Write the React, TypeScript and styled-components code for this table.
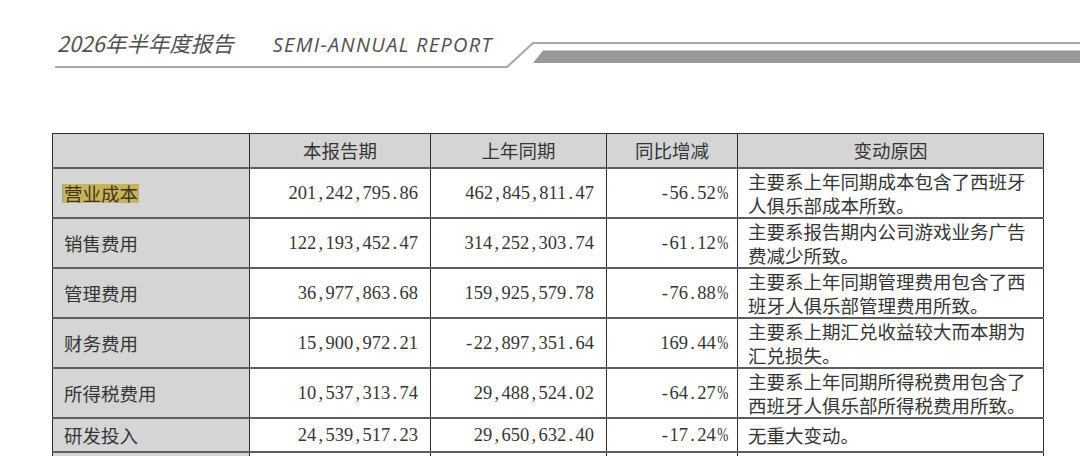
import styled, { createGlobalStyle } from "styled-components";

const GlobalStyle = createGlobalStyle`
  html, body {
    margin: 0;
    padding: 0;
    background: #ffffff;
  }
  body {
    font-family: "Noto Sans CJK SC", "Noto Sans", sans-serif;
    overflow: hidden;
  }
`

const Page = styled.div`
  width: 1080px;
  height: 456px;
  overflow: hidden;
  background: #fff;
`

const Header = styled.div`
  display: flex;
  align-items: flex-end;
  height: 68px;
`

const TitleBlock = styled.div`
  display: flex;
  align-items: baseline;
  gap: 39px;
  width: 450px;
  margin-left: 55px;
  padding: 0 0 8px 2px;
  border-bottom: 2px solid #a8a8a8;
  color: #505050;
  font-style: italic;
`

const TitleCn = styled.span`
  font-family: "Noto Sans CJK SC", "Noto Sans", sans-serif;
  font-size: 21.5px;
  line-height: 26px;
`

const TitleEn = styled.span`
  font-family: "Open Sans", "Noto Sans", sans-serif;
  font-size: 20px;
  line-height: 26px;
  letter-spacing: 1.3px;
`

const Decoration = styled.svg`
  display: block;
  flex: 1;
  height: 28px;
`

const Table = styled.table`
  margin: 65px 0 0 52px;
  width: 991px;
  border-collapse: collapse;
  table-layout: fixed;
  border: 1px solid #2e2e2e;
  color: #353535;
  font-size: 18.5px;
`

const Row = styled.tr<{ $h: number }>`
  height: ${p => p.$h}px;
`

const HeadCell = styled.th`
  background: #d5d5d5;
  font-weight: normal;
  text-align: center;
  padding: 0;
  border-left: 1px solid #2e2e2e;
  border-bottom: 2px solid #5e5e5e;
  line-height: 24px;
`

const ItemCell = styled.td`
  background: #d5d5d5;
  padding: 0 10px 0 11px;
  border-left: 1px solid #2e2e2e;
  border-bottom: 2px solid #5e5e5e;
  line-height: 24px;
  white-space: nowrap;
`

const NumCell = styled.td`
  background: #fff;
  text-align: right;
  padding: 0 12px 0 4px;
  border-left: 1px solid #2e2e2e;
  border-bottom: 2px solid #5e5e5e;
  font-family: "Liberation Serif", "Times New Roman", serif;
  line-height: 24px;
  white-space: nowrap;
`

const ReasonCell = styled.td<{ $middle?: boolean }>`
  background: #fff;
  padding: 0 10px 0 10px;
  border-left: 1px solid #2e2e2e;
  border-bottom: 2px solid #5e5e5e;
  line-height: 24px;
  vertical-align: ${p => (p.$middle ? "middle" : "top")};
  word-break: break-all;
`

const Marked = styled.span`
  display: inline-block;
  padding: 0 1px;
  margin-left: -1px;
  background: #c8b35a;
  color: #3b3720;
  line-height: 19px;
  box-shadow: -1px 0 0 #8ea2c4;
`

const Sep = styled.span<{ $squeeze?: boolean }>`
  display: inline-block;
  width: 0.5em;
  text-align: center;
  transform: ${p => (p.$squeeze ? "scaleX(0.72)" : "none")};
`

type Line = {
  item: string
  current: string
  last: string
  change: string
  reason: string
  mark?: boolean
  h: number
}

const rows: Line[] = [
  { item: "营业成本", current: "201,242,795.86", last: "462,845,811.47", change: "-56.52%", reason: "主要系上年同期成本包含了西班牙人俱乐部成本所致。", mark: true, h: 50 },
  { item: "销售费用", current: "122,193,452.47", last: "314,252,303.74", change: "-61.12%", reason: "主要系报告期内公司游戏业务广告费减少所致。", h: 49 },
  { item: "管理费用", current: "36,977,863.68", last: "159,925,579.78", change: "-76.88%", reason: "主要系上年同期管理费用包含了西班牙人俱乐部管理费用所致。", h: 50 },
  { item: "财务费用", current: "15,900,972.21", last: "-22,897,351.64", change: "169.44%", reason: "主要系上期汇兑收益较大而本期为汇兑损失。", h: 50 },
  { item: "所得税费用", current: "10,537,313.74", last: "29,488,524.02", change: "-64.27%", reason: "主要系上年同期所得税费用包含了西班牙人俱乐部所得税费用所致。", h: 49 },
  { item: "研发投入", current: "24,539,517.23", last: "29,650,632.40", change: "-17.24%", reason: "无重大变动。", h: 34 },
]

// SimSun-style half-width punctuation between the digits
const Num = ({ value }: { value: string }) => (
  <>
    {value.split("").map((ch, i) =>
      /[0-9]/.test(ch) ? ch : <Sep key={i} $squeeze={ch === "%"}>{ch}</Sep>
    )}
  </>
)

const App = () => {
  return (
    <Page>
      <GlobalStyle/>
      <Header>
        <TitleBlock>
          <TitleCn>2026年半年度报告</TitleCn>
          <TitleEn>SEMI-ANNUAL REPORT</TitleEn>
        </TitleBlock>
        <Decoration viewBox="0 0 573 28" preserveAspectRatio="xMinYMin slice">
          <polyline points="-2,27 0,27 26,3 600,3" fill="none" stroke="#a8a8a8" strokeWidth="2"/>
          <polygon points="36,10.5 600,10.5 600,23 26,23" fill="#999999"/>
        </Decoration>
      </Header>
      <Table>
        <colgroup>
          <col style={{ width: 197 }}/>
          <col style={{ width: 181 }}/>
          <col style={{ width: 176 }}/>
          <col style={{ width: 131 }}/>
          <col style={{ width: 306 }}/>
        </colgroup>
        <thead>
          <Row $h={34}>
            <HeadCell/>
            <HeadCell>本报告期</HeadCell>
            <HeadCell>上年同期</HeadCell>
            <HeadCell>同比增减</HeadCell>
            <HeadCell>变动原因</HeadCell>
          </Row>
        </thead>
        <tbody>
          {rows.map(r => (
            <Row key={r.item} $h={r.h}>
              <ItemCell>{r.mark ? <Marked>{r.item}</Marked> : r.item}</ItemCell>
              <NumCell><Num value={r.current}/></NumCell>
              <NumCell><Num value={r.last}/></NumCell>
              <NumCell><Num value={r.change}/></NumCell>
              <ReasonCell $middle={r.h < 40}>{r.reason}</ReasonCell>
            </Row>
          ))}
          <Row $h={50}>
            <ItemCell/>
            <NumCell/>
            <NumCell/>
            <NumCell/>
            <ReasonCell>主要系报告期内应收款项计提的坏账准备减少所致。</ReasonCell>
          </Row>
        </tbody>
      </Table>
    </Page>
  )
}

export default App
